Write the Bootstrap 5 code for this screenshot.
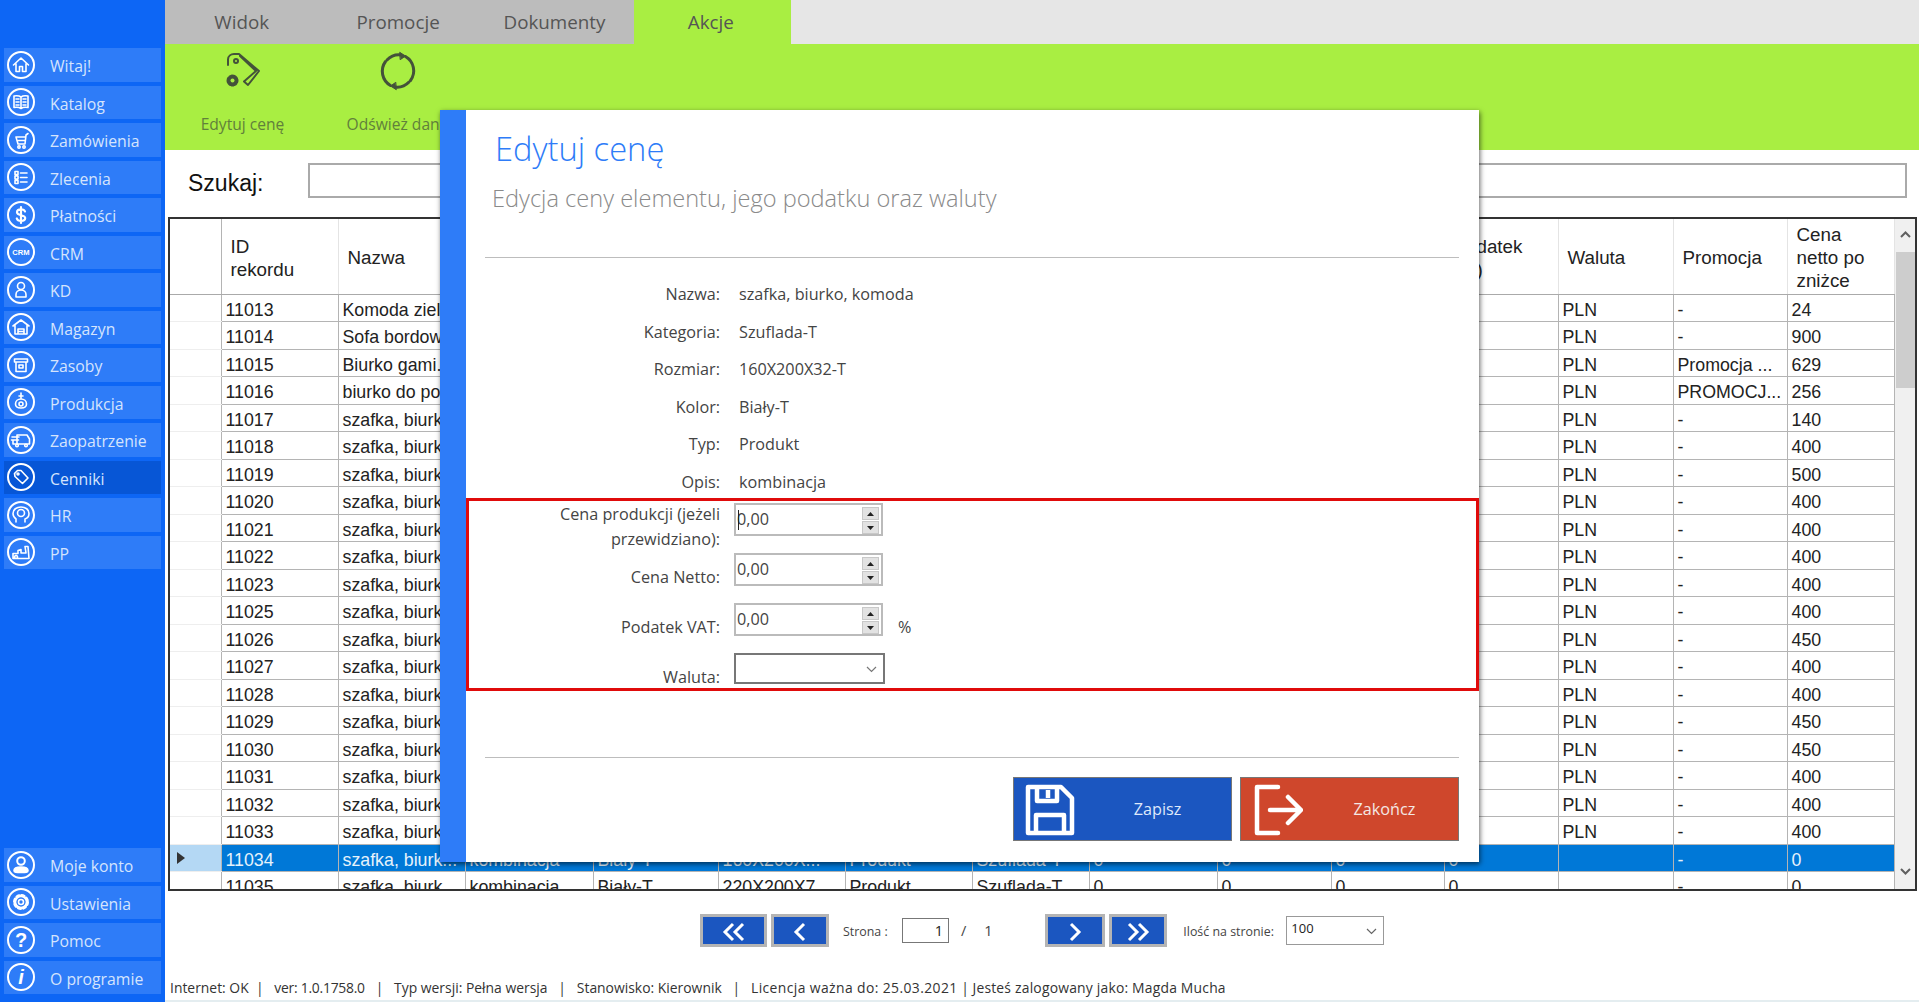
<!DOCTYPE html>
<html lang="pl"><head><meta charset="utf-8"><title>Edytuj cenę</title>
<link href="https://cdn.jsdelivr.net/npm/bootstrap@5.3.0/dist/css/bootstrap.min.css" rel="stylesheet">
<style>
html,body{height:100%;overflow:hidden}
body{font-family:"Open Sans","Liberation Sans",sans-serif;background:#fff;color:#444}
.app-shell{width:1919px;height:1002px;position:relative}
.side{width:165px;background:#0d66f5;padding:48px 4px 4px 4px;height:100%}
.side-item{height:33.5px;margin-bottom:4px;background:#2e7cf8;color:#d5e4fd;font-size:15.8px;padding-left:3px;gap:15px}
.side-item.on{background:#0756d6}
.side-item svg{width:28px;height:28px;flex:none}
.side-txt{padding-top:5px}
.side-low{margin-top:auto}
.ic{fill:none;stroke:#fff;stroke-width:1.6;stroke-linecap:round;stroke-linejoin:round}
.ic .rim{stroke-width:2}
.ic text{fill:#fff;stroke:none;font-family:"Liberation Sans",sans-serif;font-weight:700;text-anchor:middle}
.main-col{width:1754px}
.main-col>*{flex:none}
.tab-bar{height:44px;background:#e6e6e6}
.tab-cell{width:156.4px;background:#bcbcbc;color:#555;font-size:18.8px;padding-right:3px}
.tab-cell.on{background:#a9ee42}
.ribbon{height:106px;background:#a9ee42}
.rib-item{width:155px;color:#61803b;font-size:15.6px;padding-top:7px}
.rib-item svg{width:40px;height:40px;margin-bottom:21.500px}
.rib-ic{fill:none;stroke:#44523a;stroke-width:2;stroke-linecap:round;stroke-linejoin:round}
.search-row{height:67px;padding:13px 12px 0 23px}
.search-lab{width:120px;font:23px "Liberation Sans",sans-serif;color:#111;padding-top:7px}
.search-box{width:1599px;height:35px;border:2px solid #aaa;border-radius:0}
.grid-wrap{height:674px;margin-left:3px;width:1749px;border:2px solid #333;overflow:hidden}
.dg{table-layout:fixed;width:1724px;margin:0;border-collapse:collapse;font:17.8px/1 "Liberation Sans",sans-serif;color:#222;flex:none}
.dg th{height:75px;font-size:18.8px;font-weight:400;padding:3px 5px 0 9px;line-height:23px;border:1px solid #e4e4e4;border-top:0;border-bottom:1px solid #aaa;vertical-align:middle;color:#222;background:#fff}
.dg td{height:27.5px;padding:6px 1px 0 4px;border:1px solid #b4b4b4;border-top:0;vertical-align:middle;white-space:nowrap;overflow:hidden;background:#fff;color:#222}
.dg tr>:first-child{border-left:0;border-right:1px solid #b4b4b4}
.dg td:first-child{border-bottom-color:#eee}
.dg tr.sel td{background:#0078d7;color:#e6f2fb}
.dg tr.sel td:first-child{background:#b4d8f4;padding:0 0 0 7px}
.vbar{width:21px;background:#f0f0f0;position:relative;flex:none}
.vbar-thumb{position:absolute;left:1px;right:1px;top:33px;height:136px;background:#cdcdcd}
.vbar svg{position:absolute;left:5px;width:11px;height:7px}
.pager{height:33px;margin-top:23px;padding-left:535px;font-size:12.4px;color:#444}
.pager-txt{padding-top:3px}
.pg-btn{height:33px;border:3px solid #b4b4b4;background:#1b56c0;border-radius:0;padding:0}
.pg-btn svg{width:24px;height:22px}
.pg-num{width:47px;height:25px;border:1px solid #777;border-radius:0;padding:0 5px;font-size:14.5px;text-align:right;line-height:23px;color:#222;min-height:0}
.pg-sel{width:98px;height:29px;border:1px solid #999;font-size:13px;color:#222;padding:0 4px;line-height:22px}
.status-line{height:22px;margin-top:31px;padding-left:5px;font-size:13.9px;color:#333;white-space:pre}
.st-ver{letter-spacing:-.25px}
.st-lic{letter-spacing:.4px}
.st-usr{letter-spacing:.2px}
.bottom-strip{height:2px;background:#e4edf0}
.dlg{position:absolute;left:440px;top:110px;width:1039px;height:752px;background:#fff;border-left:26px solid #2e7cf8;box-shadow:1px 2px 5px rgba(0,0,0,.6)}
.dlg-title{font-size:32.700px;font-weight:300;color:#2e7cf8;line-height:40px;margin:19px 0 0 29px}
.dlg-sub{font-size:23.600px;font-weight:300;color:#8a8a8a;line-height:30px;margin:14px 0 0 26px}
.dlg-rule{margin:0 0 0 19px;width:974px;height:1px;background:#bdbdbd;opacity:1;border:0}
.fld{height:37.5px;line-height:37.5px;font-size:16.2px;color:#444}
.fld-lab{width:254px;text-align:right;flex:none;margin-right:19px}
.red-box{height:193px;margin-top:-3px;border:3px solid #e00b0b;padding-top:2px;font-size:16.2px;position:relative;color:#444}
.ed-row{height:50px}
.ed-lab{width:251px;text-align:right;line-height:25px;margin-top:12px;margin-right:14px;flex:none}
.ed-row:first-child .ed-lab{margin-top:-1px}
.spin{width:149px;height:33px;border:2px solid #bbb;border-radius:0;padding:0 1px;line-height:28px;font-size:16.2px;color:#444;position:relative;min-height:0}
.spin-bt{position:absolute;right:2px;top:2px;width:17px;height:27px;gap:1px}
.spin-bt span{flex:1;background:#e2e2e2;border:1px solid #c8c8c8}
.spin-bt svg{width:7px;height:4px;fill:#222}
.caret-bar{position:absolute;left:2px;top:5px;width:1px;height:20px;background:#222}
.ed-sel{width:151px;height:31px;border:2px solid #777;border-radius:0;position:relative}
.ed-sel svg,.pg-sel svg{position:absolute;right:6px;top:11px;width:11px;height:7px}
.pct{margin:12px 0 0 15px;line-height:25px}
.act-btn{width:219px;height:64px;border-radius:0;border:1px solid #777;color:#f4e8e4;font-size:16.2px;padding:0 0 0 70px;position:relative}
.act-btn svg{position:absolute;left:10px;top:6px;width:52px;height:52px}
.act-save{background:#1b56c0;color:#dfe9fb}
.act-quit{background:#cf472c}
.act-btn:hover{color:#fff}
</style></head><body>
<div class="app-shell d-flex">
<nav class="side d-flex flex-column flex-none">
<div class="side-item d-flex align-items-center"><svg class="ic" viewBox="0 0 28 28"><circle class="rim" cx="14" cy="14" r="13"/><path d="M6.5 14 14 7l7.500 7M9 12.500V20.500h3.500v-5h3v5H19V12.500"/></svg><span class="side-txt">Witaj!</span></div>
<div class="side-item d-flex align-items-center"><svg class="ic" viewBox="0 0 28 28"><circle class="rim" cx="14" cy="14" r="13"/><path d="M14 9c-2-1.500-4-1.500-7-1v11.500c3-.5 5-.5 7 1 2-1.500 4-1.500 7-1V8c-3-.5-5-.5-7 1zM14 9v11.500M9 11h3M9 14h3M9 17h3M16 11h3M16 14h3M16 17h3"/></svg><span class="side-txt">Katalog</span></div>
<div class="side-item d-flex align-items-center"><svg class="ic" viewBox="0 0 28 28"><circle class="rim" cx="14" cy="14" r="13"/><path d="M21 7.500 19 9 18 18H11L9 11H18.700M11.500 14.500h6.800"/><circle cx="12" cy="21" r="1.200"/><circle cx="17" cy="21" r="1.200"/></svg><span class="side-txt">Zamówienia</span></div>
<div class="side-item d-flex align-items-center"><svg class="ic" viewBox="0 0 28 28"><circle class="rim" cx="14" cy="14" r="13"/><path d="M8 8.500h3v3H8zM8 13h3v3H8zM8 17.500h3v3H8zM13.500 10h6.500M13.500 14.500h6.500M13.500 19h6.500"/></svg><span class="side-txt">Zlecenia</span></div>
<div class="side-item d-flex align-items-center"><svg class="ic" viewBox="0 0 28 28"><circle class="rim" cx="14" cy="14" r="13"/><path stroke-width="2.200" d="M18 10.500c-.5-1.500-2-2.200-4-2.200-2.300 0-4 1.200-4 2.900 0 4 8.200 2 8.200 5.900 0 1.800-1.800 2.900-4.200 2.900-2.200 0-3.700-.9-4.200-2.500M14 6v16"/></svg><span class="side-txt">Płatności</span></div>
<div class="side-item d-flex align-items-center"><svg class="ic" viewBox="0 0 28 28"><circle class="rim" cx="14" cy="14" r="13"/><text x="14" y="16.800" font-size="7.600">CRM</text></svg><span class="side-txt">CRM</span></div>
<div class="side-item d-flex align-items-center"><svg class="ic" viewBox="0 0 28 28"><circle class="rim" cx="14" cy="14" r="13"/><circle cx="14" cy="10" r="3.500"/><path d="M9 21v-2.500c0-2.500 2-4.500 5-4.500s5 2 5 4.500V21z"/></svg><span class="side-txt">KD</span></div>
<div class="side-item d-flex align-items-center"><svg class="ic" viewBox="0 0 28 28"><circle class="rim" cx="14" cy="14" r="13"/><path d="M6 13 14 7l8 6M8 12v9h12v-9M11 21v-5h6v5M11 18.500h6"/></svg><span class="side-txt">Magazyn</span></div>
<div class="side-item d-flex align-items-center"><svg class="ic" viewBox="0 0 28 28"><circle class="rim" cx="14" cy="14" r="13"/><path d="M7.500 8h13v3h-13zM9 11v9.500h10V11M12 14h4v3h-4z"/></svg><span class="side-txt">Zasoby</span></div>
<div class="side-item d-flex align-items-center"><svg class="ic" viewBox="0 0 28 28"><circle class="rim" cx="14" cy="14" r="13"/><path d="M14 5v6M12 8h4M8.500 16c0-3 2.500-5 5.500-5s5.500 2 5.500 5-2.500 4-5.500 4-5.500-1-5.500-4z"/><circle cx="14" cy="16" r="2"/></svg><span class="side-txt">Produkcja</span></div>
<div class="side-item d-flex align-items-center"><svg class="ic" viewBox="0 0 28 28"><circle class="rim" cx="14" cy="14" r="13"/><path d="M10 9h10l2.500 4v5H6v-3M5 11h7M4.500 14h7M10 18v-9"/><circle cx="10" cy="19.500" r="1.300"/><circle cx="19" cy="19.500" r="1.300"/></svg><span class="side-txt">Zaopatrzenie</span></div>
<div class="side-item d-flex align-items-center on"><svg class="ic" viewBox="0 0 28 28"><circle class="rim" cx="14" cy="14" r="13"/><path d="M7.500 10.500 10.500 7.500H14L21 15l-5.500 5.500L8 13.500z"/><circle cx="11" cy="11" r="1"/></svg><span class="side-txt">Cenniki</span></div>
<div class="side-item d-flex align-items-center"><svg class="ic" viewBox="0 0 28 28"><circle class="rim" cx="14" cy="14" r="13"/><path d="M9 21v-3c-2-1.500-3-3-3-5.500C6 8.500 9.500 6 14 6s8 2.500 8 6.500c0 3.500-2.500 5-4 5.500v3"/><circle cx="14" cy="12" r="3.500"/></svg><span class="side-txt">HR</span></div>
<div class="side-item d-flex align-items-center"><svg class="ic" viewBox="0 0 28 28"><circle class="rim" cx="14" cy="14" r="13"/><path d="M6 20.500v-5h5v-3l3-1V15h5l-1-6.500h3L22 20.500zM9 17.500a1.500 1.500 0 1 0 .1 0"/></svg><span class="side-txt">PP</span></div>
<div class="side-low">
<div class="side-item d-flex align-items-center"><svg class="ic" viewBox="0 0 28 28"><circle class="rim" cx="14" cy="14" r="13"/><circle cx="14" cy="10" r="3.800" stroke-width="2"/><path fill="#fff" d="M7 19.500c0-2 2-3.500 7-3.500s7 1.500 7 3.500-2 2-7 2-7 0-7-2z"/></svg><span class="side-txt">Moje konto</span></div>
<div class="side-item d-flex align-items-center"><svg class="ic" viewBox="0 0 28 28"><circle class="rim" cx="14" cy="14" r="13"/><circle cx="14" cy="14" r="6.500" stroke-width="3" stroke-dasharray="2.500 2.600"/><circle cx="14" cy="14" r="5.500"/><circle cx="14" cy="14" r="2.500"/></svg><span class="side-txt">Ustawienia</span></div>
<div class="side-item d-flex align-items-center"><svg class="ic" viewBox="0 0 28 28"><circle class="rim" cx="14" cy="14" r="13"/><text x="14" y="21" font-size="20">?</text></svg><span class="side-txt">Pomoc</span></div>
<div class="side-item d-flex align-items-center"><svg class="ic" viewBox="0 0 28 28"><circle class="rim" cx="14" cy="14" r="13"/><text x="14" y="21" font-size="20" font-style="italic">i</text></svg><span class="side-txt">O programie</span></div>
</div>
</nav>
<main class="main-col d-flex flex-column">
<div class="tab-bar d-flex">
<div class="tab-cell d-flex align-items-center justify-content-center">Widok</div>
<div class="tab-cell d-flex align-items-center justify-content-center">Promocje</div>
<div class="tab-cell d-flex align-items-center justify-content-center">Dokumenty</div>
<div class="tab-cell on d-flex align-items-center justify-content-center">Akcje</div>
</div>
<div class="ribbon d-flex">
<div class="rib-item d-flex flex-column align-items-center"><svg class="rib-ic" viewBox="0 0 40 40"><path d="M5 14V8.500C5 5 8 3 11 3h5l20 17-11 14-4-3.500L33 20 17 5"/><circle cx="13" cy="10" r="2"/><circle cx="9.500" cy="29.500" r="5" fill="#44523a" stroke-dasharray="2 1.300"/><circle cx="9.500" cy="29.500" r="2" fill="#a9ee42" stroke="none"/></svg>Edytuj cenę</div>
<div class="rib-item d-flex flex-column align-items-center"><svg class="rib-ic" viewBox="0 0 40 40"><path stroke-width="3" d="M27.500 5.500a16.500 16.500 0 0 1 5 24M12.500 34.500a16.500 16.500 0 0 1-5-24M9 9a16.500 16.500 0 0 1 14-5M31 31a16.500 16.500 0 0 1-14 5"/><path fill="#44523a" d="M22 1.500l5.500 3.500-5 3.500zM18 38.500l-5.500-3.500 5-3.500z" stroke-width="1"/></svg>Odśwież dane</div>
</div>
<div class="search-row d-flex align-items-start">
<div class="search-lab">Szukaj:</div>
<div class="search-box form-control"></div>
</div>
<div class="grid-wrap d-flex">
<table class="dg table">
<colgroup><col style="width:51px"><col style="width:117px"><col style="width:127px"><col style="width:128px"><col style="width:125px"><col style="width:127px"><col style="width:127px"><col style="width:117px"><col style="width:128px"><col style="width:114px"><col style="width:113px"><col style="width:114px"><col style="width:115px"><col style="width:114px"><col style="width:107px"></colgroup>
<thead><tr><th></th><th>ID<br>rekordu</th><th>Nazwa</th><th></th><th></th><th></th><th></th><th></th><th></th><th></th><th></th><th>Podatek<br>(%)</th><th>Waluta</th><th>Promocja</th><th>Cena<br>netto po<br>zniżce</th></tr></thead>
<tbody>
<tr><td></td><td>11013</td><td>Komoda ziel</td><td></td><td></td><td></td><td></td><td></td><td></td><td></td><td></td><td></td><td>PLN</td><td>-</td><td>24</td></tr>
<tr><td></td><td>11014</td><td>Sofa bordow</td><td></td><td></td><td></td><td></td><td></td><td></td><td></td><td></td><td></td><td>PLN</td><td>-</td><td>900</td></tr>
<tr><td></td><td>11015</td><td>Biurko gami.</td><td></td><td></td><td></td><td></td><td></td><td></td><td></td><td></td><td></td><td>PLN</td><td>Promocja ...</td><td>629</td></tr>
<tr><td></td><td>11016</td><td>biurko do po</td><td></td><td></td><td></td><td></td><td></td><td></td><td></td><td></td><td></td><td>PLN</td><td>PROMOCJ...</td><td>256</td></tr>
<tr><td></td><td>11017</td><td>szafka, biurk</td><td></td><td></td><td></td><td></td><td></td><td></td><td></td><td></td><td></td><td>PLN</td><td>-</td><td>140</td></tr>
<tr><td></td><td>11018</td><td>szafka, biurk</td><td></td><td></td><td></td><td></td><td></td><td></td><td></td><td></td><td></td><td>PLN</td><td>-</td><td>400</td></tr>
<tr><td></td><td>11019</td><td>szafka, biurk</td><td></td><td></td><td></td><td></td><td></td><td></td><td></td><td></td><td></td><td>PLN</td><td>-</td><td>500</td></tr>
<tr><td></td><td>11020</td><td>szafka, biurk</td><td></td><td></td><td></td><td></td><td></td><td></td><td></td><td></td><td></td><td>PLN</td><td>-</td><td>400</td></tr>
<tr><td></td><td>11021</td><td>szafka, biurk</td><td></td><td></td><td></td><td></td><td></td><td></td><td></td><td></td><td></td><td>PLN</td><td>-</td><td>400</td></tr>
<tr><td></td><td>11022</td><td>szafka, biurk</td><td></td><td></td><td></td><td></td><td></td><td></td><td></td><td></td><td></td><td>PLN</td><td>-</td><td>400</td></tr>
<tr><td></td><td>11023</td><td>szafka, biurk</td><td></td><td></td><td></td><td></td><td></td><td></td><td></td><td></td><td></td><td>PLN</td><td>-</td><td>400</td></tr>
<tr><td></td><td>11025</td><td>szafka, biurk</td><td></td><td></td><td></td><td></td><td></td><td></td><td></td><td></td><td></td><td>PLN</td><td>-</td><td>400</td></tr>
<tr><td></td><td>11026</td><td>szafka, biurk</td><td></td><td></td><td></td><td></td><td></td><td></td><td></td><td></td><td></td><td>PLN</td><td>-</td><td>450</td></tr>
<tr><td></td><td>11027</td><td>szafka, biurk</td><td></td><td></td><td></td><td></td><td></td><td></td><td></td><td></td><td></td><td>PLN</td><td>-</td><td>400</td></tr>
<tr><td></td><td>11028</td><td>szafka, biurk</td><td></td><td></td><td></td><td></td><td></td><td></td><td></td><td></td><td></td><td>PLN</td><td>-</td><td>400</td></tr>
<tr><td></td><td>11029</td><td>szafka, biurk</td><td></td><td></td><td></td><td></td><td></td><td></td><td></td><td></td><td></td><td>PLN</td><td>-</td><td>450</td></tr>
<tr><td></td><td>11030</td><td>szafka, biurk</td><td></td><td></td><td></td><td></td><td></td><td></td><td></td><td></td><td></td><td>PLN</td><td>-</td><td>450</td></tr>
<tr><td></td><td>11031</td><td>szafka, biurk</td><td></td><td></td><td></td><td></td><td></td><td></td><td></td><td></td><td></td><td>PLN</td><td>-</td><td>400</td></tr>
<tr><td></td><td>11032</td><td>szafka, biurk</td><td></td><td></td><td></td><td></td><td></td><td></td><td></td><td></td><td></td><td>PLN</td><td>-</td><td>400</td></tr>
<tr><td></td><td>11033</td><td>szafka, biurk</td><td></td><td></td><td></td><td></td><td></td><td></td><td></td><td></td><td></td><td>PLN</td><td>-</td><td>400</td></tr>
<tr class="sel"><td><svg width="8" height="12" viewBox="0 0 8 12"><path fill="#333" d="M0 0l8 6-8 6z"/></svg></td><td>11034</td><td>szafka, biurk...</td><td>kombinacja</td><td>Biały-T</td><td>160X200X...</td><td>Produkt</td><td>Szuflada-T</td><td>0</td><td>0</td><td>0</td><td>0</td><td></td><td>-</td><td>0</td></tr>
<tr><td></td><td>11035</td><td>szafka, biurk...</td><td>kombinacja</td><td>Biały-T</td><td>220X200X7</td><td>Produkt</td><td>Szuflada-T</td><td>0</td><td>0</td><td>0</td><td>0</td><td></td><td>-</td><td>0</td></tr>
</tbody></table>
<div class="vbar"><svg style="top:12px" viewBox="0 0 11 7"><path d="M1 6l4.500-4.500L10 6" fill="none" stroke="#606060" stroke-width="2"/></svg><div class="vbar-thumb"></div><svg style="bottom:14px" viewBox="0 0 11 7"><path d="M1 1l4.500 4.500L10 1" fill="none" stroke="#606060" stroke-width="2"/></svg></div>
</div>
<div class="pager d-flex align-items-center">
<button class="pg-btn btn" style="width:67px"><svg viewBox="0 0 24 22"><path d="M11 3 3 11l8 8M21 3l-8 8 8 8" fill="none" stroke="#fff" stroke-width="3"/></svg></button>
<button class="pg-btn btn ms-1" style="width:58px"><svg viewBox="0 0 24 22"><path d="M16 3l-8 8 8 8" fill="none" stroke="#fff" stroke-width="3"/></svg></button>
<span class="pager-txt" style="margin-left:14px;width:59px">Strona :</span>
<div class="pg-num form-control">1</div>
<span style="margin-left:12px;font-size:14.5px">/</span>
<span style="margin-left:18px;font-size:14.5px;width:61px">1</span>
<button class="pg-btn btn" style="width:60px"><svg viewBox="0 0 24 22"><path d="M8 3l8 8-8 8" fill="none" stroke="#fff" stroke-width="3"/></svg></button>
<button class="pg-btn btn ms-1" style="width:58px"><svg viewBox="0 0 24 22"><path d="M3 3l8 8-8 8M13 3l8 8-8 8" fill="none" stroke="#fff" stroke-width="3"/></svg></button>
<span class="pager-txt" style="margin-left:16px;width:103px">Ilość na stronie:</span>
<div class="pg-sel position-relative">100<svg viewBox="0 0 11 7"><path d="M1 1l4.500 4.500L10 1" fill="none" stroke="#666" stroke-width="1.200"/></svg></div>
</div>
<div class="status-line">Internet: OK  |   <span class="st-ver">ver: 1.0.1758.0</span>   |   Typ wersji: Pełna wersja   |   Stanowisko: Kierownik   |   <span class="st-lic">Licencja ważna do: 25.03.2021</span> | <span class="st-usr">Jesteś zalogowany jako: Magda Mucha</span></div>
<div class="bottom-strip"></div>
</main>
<section class="dlg d-flex flex-column">
<div class="dlg-title">Edytuj cenę</div>
<div class="dlg-sub">Edycja ceny elementu, jego podatku oraz waluty</div>
<hr class="dlg-rule" style="margin-top:44px;margin-bottom:18px">
<div class="fld d-flex"><div class="fld-lab">Nazwa:</div><div>szafka, biurko, komoda</div></div>
<div class="fld d-flex"><div class="fld-lab">Kategoria:</div><div>Szuflada-T</div></div>
<div class="fld d-flex"><div class="fld-lab">Rozmiar:</div><div>160X200X32-T</div></div>
<div class="fld d-flex"><div class="fld-lab">Kolor:</div><div>Biały-T</div></div>
<div class="fld d-flex"><div class="fld-lab">Typ:</div><div>Produkt</div></div>
<div class="fld d-flex"><div class="fld-lab">Opis:</div><div>kombinacja</div></div>
<div class="red-box">
<div class="ed-row d-flex align-items-start"><div class="ed-lab">Cena produkcji (jeżeli przewidziano):</div><div class="spin form-control">0,00<i class="caret-bar"></i><div class="spin-bt d-flex flex-column"><span class="d-flex align-items-center justify-content-center"><svg viewBox="0 0 7 4"><path d="M0 4l3.500-4L7 4z"/></svg></span><span class="d-flex align-items-center justify-content-center"><svg viewBox="0 0 7 4"><path d="M0 0l3.500 4L7 0z"/></svg></span></div></div></div>
<div class="ed-row d-flex align-items-start"><div class="ed-lab">Cena Netto:</div><div class="spin form-control">0,00<div class="spin-bt d-flex flex-column"><span class="d-flex align-items-center justify-content-center"><svg viewBox="0 0 7 4"><path d="M0 4l3.500-4L7 4z"/></svg></span><span class="d-flex align-items-center justify-content-center"><svg viewBox="0 0 7 4"><path d="M0 0l3.500 4L7 0z"/></svg></span></div></div></div>
<div class="ed-row d-flex align-items-start"><div class="ed-lab">Podatek VAT:</div><div class="spin form-control">0,00<div class="spin-bt d-flex flex-column"><span class="d-flex align-items-center justify-content-center"><svg viewBox="0 0 7 4"><path d="M0 4l3.500-4L7 4z"/></svg></span><span class="d-flex align-items-center justify-content-center"><svg viewBox="0 0 7 4"><path d="M0 0l3.500 4L7 0z"/></svg></span></div></div><div class="pct">%</div></div>
<div class="ed-row d-flex align-items-start"><div class="ed-lab">Waluta:</div><div class="ed-sel"><svg viewBox="0 0 11 7"><path d="M1 1l4.500 4.500L10 1" fill="none" stroke="#777" stroke-width="1.200"/></svg></div></div>
</div>
<hr class="dlg-rule" style="margin-top:66px;margin-bottom:19px">
<div class="d-flex gap-2" style="margin-left:547px">
<button class="btn act-btn act-save"><svg viewBox="0 0 52 52"><path d="M4 3h33l11 11v35H4zM13 3v14h20V3M24 6v8M12 49V31h28v18" fill="none" stroke="#fff" stroke-width="4.500" stroke-linejoin="round"/></svg>Zapisz</button>
<button class="btn act-btn act-quit"><svg viewBox="0 0 52 52"><path d="M27 3H6v46h21M19 26h30M37 13l13 13-13 13" fill="none" stroke="#fff" stroke-width="4.500" stroke-linecap="round" stroke-linejoin="round"/></svg>Zakończ</button>
</div>
</section>
</div>
</body></html>
